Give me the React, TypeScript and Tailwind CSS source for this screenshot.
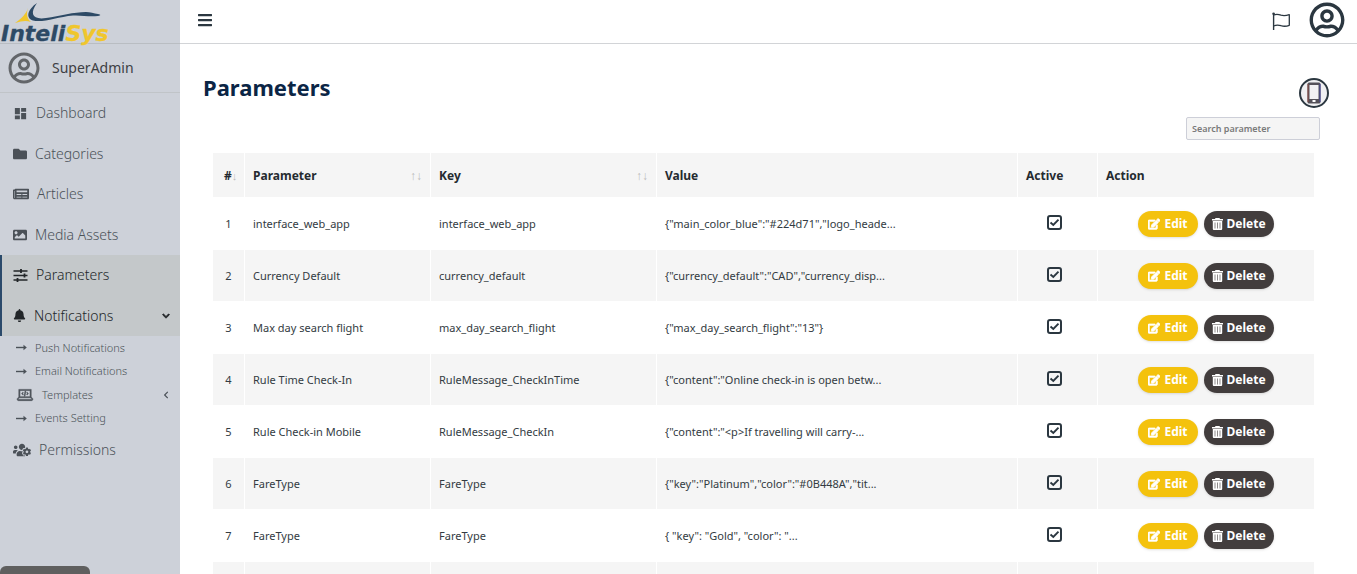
import type { ReactNode } from 'react';
import { FaBars, FaBell, FaEdit, FaFolder, FaImage, FaNewspaper, FaRegUserCircle, FaUsersCog, FaChevronDown, FaChevronLeft } from 'react-icons/fa';
import { MdDashboard } from 'react-icons/md';
import { LiaLaptopCodeSolid } from 'react-icons/lia';

type Row = { id: number; name: string; code: string; value: string };

const rows: Row[] = [
  { id: 1, name: 'interface_web_app', code: 'interface_web_app', value: '{"main_color_blue":"#224d71","logo_heade...' },
  { id: 2, name: 'Currency Default', code: 'currency_default', value: '{"currency_default":"CAD","currency_disp...' },
  { id: 3, name: 'Max day search flight', code: 'max_day_search_flight', value: '{"max_day_search_flight":"13"}' },
  { id: 4, name: 'Rule Time Check-In', code: 'RuleMessage_CheckInTime', value: '{"content":"Online check-in is open betw...' },
  { id: 5, name: 'Rule Check-in Mobile', code: 'RuleMessage_CheckIn', value: '{"content":"<p>If travelling will carry-...' },
  { id: 6, name: 'FareType', code: 'FareType', value: '{"key":"Platinum","color":"#0B448A","tit...' },
  { id: 7, name: 'FareType', code: 'FareType', value: '{ "key": "Gold", "color": "...' },
];

function Logo() {
  return (
    <svg viewBox="0 0 114 48" className="h-12 w-[114px]" role="img" aria-label="InteliSys">
      <path d="M37 3C28 9 25 18 33 20.500C43 23 57 17 73 15.500C82 15 88 17 98 16C101 15.500 101 14.500 98 14C94 13.500 90 12 86 12C74 12 60 16 46 18C33 20 29 14 37 3Z" fill="#2d4a66" />
      <path d="M28 8C26 14 22 18 15 23C22 21 26 20 31 22C27 19 26 14 28 8Z" fill="#f0c62d" />
      <text x="1" y="41" fontSize="22" fontWeight="700" fontStyle="italic" fontFamily="DejaVu Sans, sans-serif" strokeWidth="0.300">
        <tspan fill="#2d4a66" stroke="#2d4a66">Inteli</tspan>
        <tspan fill="#f0c62d" stroke="#f0c62d">Sys</tspan>
      </text>
    </svg>
  );
}

function SlidersIcon() {
  return (
    <svg viewBox="0 0 15 13" className="h-[13px] w-[15px]" fill="none" stroke="currentColor" aria-hidden="true">
      <path strokeWidth="1.500" d="M0.500 2H14.500M0.500 6.500H14.500M0.500 11H14.500" />
      <path strokeWidth="1.800" d="M8 0V4M11.500 4.500V8.500M4.500 9V13" />
    </svg>
  );
}

function ArrowIcon() {
  return (
    <svg viewBox="0 0 11 7" className="h-[7px] w-[11px]" aria-hidden="true">
      <path d="M0 3.500H8" stroke="currentColor" strokeWidth="1.400" />
      <path d="M7.500 0.800L10.800 3.500L7.500 6.200Z" fill="currentColor" />
    </svg>
  );
}

function TrashIcon() {
  return (
    <svg viewBox="0 0 11 12" className="h-3 w-[11px]" aria-hidden="true">
      <path fill="currentColor" d="M3.500 0H7.500L8 1H11V2.500H0V1H3ZM0.800 3H10.200V11Q10.200 12 9.200 12H1.800Q0.800 12 0.800 11Z" />
      <path stroke="#8f8b8b" strokeWidth="1" d="M3 4.500V10.500M5.500 4.500V10.500M8 4.500V10.500" />
    </svg>
  );
}

function FlagIcon() {
  return (
    <svg viewBox="0 0 20 20" className="size-5" fill="none" stroke="currentColor" strokeWidth="1.300" strokeLinejoin="round" aria-hidden="true">
      <path d="M2.600 3V20" strokeWidth="1.400" />
      <path d="M2.600 5C5 4 7 4 10 5.200C13 6.200 15 5.800 18.300 4.700V15.300C15 16.600 13 16.600 10 15.700C7 14.700 5 14.900 2.600 16" />
      <circle cx="2.600" cy="3.800" r="1.300" fill="currentColor" stroke="none" />
    </svg>
  );
}

function PhoneIcon() {
  return (
    <svg viewBox="0 0 14 22" className="h-[22px] w-3.5" aria-hidden="true">
      <rect x="0.500" y="0.500" width="13" height="21" rx="1.500" fill="#55525a" />
      <rect x="2.500" y="3" width="9" height="14" fill="#f2f1f3" />
      <path d="M1 2V20" stroke="#8a4b45" />
      <path d="M13 2V20" stroke="#45459a" />
      <rect x="5.500" y="18" width="3" height="2" fill="#fff" />
    </svg>
  );
}

function NavLink({ icon, label, active, end }: { icon: ReactNode; label: string; active?: boolean; end?: ReactNode }) {
  return (
    <a
      href="#"
      className={
        active
          ? 'flex h-full items-center gap-2 border-l-2 border-[#2b4a6b] bg-[#c4c8ca] pr-2.5 pl-[11px] text-sm font-light text-[#222629]'
          : 'flex h-full items-center gap-2 pr-2.5 pl-[13px] text-sm font-light text-[#4b5158]'
      }
    >
      {icon}
      <span className="flex-1">{label}</span>
      {end}
    </a>
  );
}

function SubLink({ icon, label, end }: { icon: ReactNode; label: string; end?: ReactNode }) {
  return (
    <a href="#" className="flex h-full items-center gap-2 pr-2.5 pl-4 text-[11px] font-light text-[#4b5158]">
      {icon}
      <span className="flex-1">{label}</span>
      {end}
    </a>
  );
}

function Sidebar() {
  return (
    <aside className="relative h-full w-[180px] shrink-0 bg-[#cdd1d9]">
      <div className="h-11 border-b border-[#b9bdc2]">
        <Logo />
      </div>
      <div className="flex h-[49px] items-center gap-3 border-b border-[#c0c4c8] pl-2">
        <FaRegUserCircle className="size-8 text-[#63666a]" />
        <span className="text-sm text-[#3d4044]">SuperAdmin</span>
      </div>
      <nav aria-label="Main">
        <ul className="grid h-[243px] grid-rows-6">
          <li><NavLink icon={<MdDashboard className="size-[15px]" />} label="Dashboard" /></li>
          <li><NavLink icon={<FaFolder className="size-3.5" />} label="Categories" /></li>
          <li><NavLink icon={<FaNewspaper className="size-4" />} label="Articles" /></li>
          <li><NavLink icon={<FaImage className="size-3.5" />} label="Media Assets" /></li>
          <li><NavLink active icon={<SlidersIcon />} label="Parameters" /></li>
          <li><NavLink active icon={<FaBell className="size-[13px]" />} label="Notifications" end={<FaChevronDown className="size-2 stroke-current stroke-[50]" />} /></li>
        </ul>
        <ul className="grid h-[94px] grid-rows-4">
          <li><SubLink icon={<ArrowIcon />} label="Push Notifications" /></li>
          <li><SubLink icon={<ArrowIcon />} label="Email Notifications" /></li>
          <li><SubLink icon={<LiaLaptopCodeSolid className="size-[18px] stroke-current stroke-1" />} label="Templates" end={<FaChevronLeft className="size-2" />} /></li>
          <li><SubLink icon={<ArrowIcon />} label="Events Setting" /></li>
        </ul>
        <div className="h-10">
          <NavLink icon={<FaUsersCog className="size-[18px]" />} label="Permissions" />
        </div>
      </nav>
      <div className="absolute bottom-0 left-0 h-2 w-[90px] rounded-t-md bg-[#5f5f5f]" />
    </aside>
  );
}

function ActiveBox({ label }: { label: string }) {
  return (
    <label className="relative mx-auto mb-1 block size-[15px] text-[#2b3740]">
      <input type="checkbox" defaultChecked aria-label={label} className="peer block size-[15px] appearance-none rounded-[3px] border-2 border-current" />
      <svg viewBox="0 0 15 15" className="pointer-events-none absolute inset-0 hidden size-[15px] peer-checked:block" fill="none" stroke="currentColor" strokeWidth="1.900" aria-hidden="true">
        <path d="M3.500 7.500L6.300 10L11.500 4.600" />
      </svg>
    </label>
  );
}

const head = 'border-r border-b border-white px-2 pt-0.5 text-left font-bold last:border-r-0';
const cell = 'truncate border-r border-b border-white px-2 pt-0.5';

function ParameterTable() {
  return (
    <table className="w-full table-fixed border-separate border-spacing-0 text-[11px] text-[#333b42]">
      <colgroup>
        <col className="w-8" />
        <col className="w-[186px]" />
        <col className="w-[226px]" />
        <col />
        <col className="w-20" />
        <col className="w-[216px]" />
      </colgroup>
      <thead>
        <tr className="h-[45px] bg-[#f5f5f5] text-xs text-[#252b30]">
          <th className="border-r border-b border-white pt-0.5 pl-[11px] text-left font-bold">
            <span className="flex items-center">#<span className="text-[11px] font-normal text-[#bbb]">↓</span></span>
          </th>
          <th className={head}>
            <span className="flex items-center justify-between">Parameter<span className="text-xs font-normal text-[#bbb]">↑↓</span></span>
          </th>
          <th className={head}>
            <span className="flex items-center justify-between">Key<span className="text-xs font-normal text-[#bbb]">↑↓</span></span>
          </th>
          <th className={head}>Value</th>
          <th className={head}>Active</th>
          <th className={head}>Action</th>
        </tr>
      </thead>
      <tbody>
        {rows.map((row) => (
          <tr key={row.id} className="h-[52px] even:bg-[#f5f5f5]">
            <td className="border-r border-b border-white pt-0.5 text-center">{row.id}</td>
            <td className={cell}>{row.name}</td>
            <td className={cell}>{row.code}</td>
            <td className={cell}>{row.value}</td>
            <td className="border-r border-b border-white pt-0.5 pr-1.5"><ActiveBox label={`${row.name} active`} /></td>
            <td className="border-b border-white px-2">
              <div className="flex justify-center gap-1.5 text-xs font-bold text-white">
                <button type="button" className="flex h-[26px] items-center gap-1 rounded-full bg-[#f4c20d] px-2.5 shadow-sm">
                  <FaEdit className="size-3 stroke-current stroke-[36]" />Edit
                </button>
                <button type="button" className="flex h-[26px] items-center gap-1 rounded-full bg-[#423d3d] px-2 shadow-sm">
                  <TrashIcon />Delete
                </button>
              </div>
            </td>
          </tr>
        ))}
        <tr className="h-[52px] even:bg-[#f5f5f5]">
          <td className={cell} />
          <td className={cell} />
          <td className={cell} />
          <td className={cell} />
          <td className={cell} />
          <td className="border-b border-white px-2" />
        </tr>
      </tbody>
    </table>
  );
}

export default function App() {
  return (
    <div className="flex h-screen overflow-hidden bg-white font-['Noto_Sans','Open_Sans',sans-serif]">
      <Sidebar />
      <div className="min-w-0 flex-1">
        <header className="flex h-11 items-center justify-between border-b border-[#d2d4d7] pr-3 pb-1 pl-[17px] text-[#2b3740]">
          <button type="button" aria-label="Toggle menu"><FaBars className="size-4" /></button>
          <div className="flex items-center gap-[18px]">
            <button type="button" aria-label="Language"><FlagIcon /></button>
            <button type="button" aria-label="Account"><FaRegUserCircle className="size-9" /></button>
          </div>
        </header>
        <main className="pr-7 pl-[23px]">
          <div className="flex justify-between pt-[27px]">
            <h1 className="text-[22px] leading-8 font-bold text-[#0b2545]">Parameters</h1>
            <button type="button" aria-label="Mobile preview" className="mt-[7px] flex size-[30px] items-center justify-center rounded-full border-2 border-[#2b3740] bg-[#f0f0f2]">
              <PhoneIcon />
            </button>
          </div>
          <div className="mt-[9px] flex justify-end pr-[9px]">
            <input
              type="search"
              aria-label="Search parameter"
              placeholder="Search parameter"
              className="h-[23px] w-[134px] rounded-xs border border-[#cdcfd8] bg-[#f5f5f5] px-[5px] text-[9px] font-semibold placeholder:text-[#7a7a7a]"
            />
          </div>
          <div className="mt-[13px] pr-[15px] pl-2.5">
            <ParameterTable />
          </div>
        </main>
      </div>
    </div>
  );
}
